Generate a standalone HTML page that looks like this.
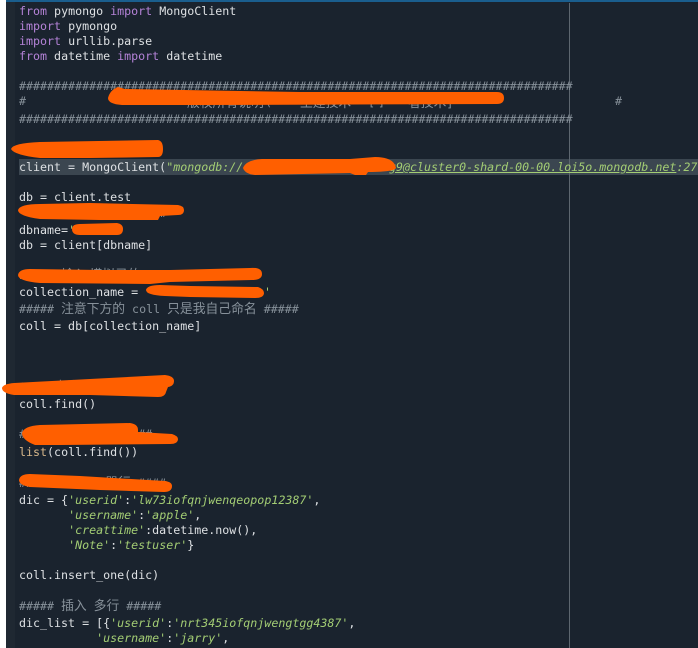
<!DOCTYPE html>
<html><head><meta charset="utf-8">
<style>
html,body{margin:0;padding:0;background:#fff}
#p{position:relative;width:698px;height:648px;overflow:hidden;background:#fff}
#b{position:absolute;left:6px;top:0;width:692px;height:648px;background:#1a232e}
#g{position:absolute;left:6px;top:0;width:9px;height:648px;background:#1f2832}
#t{position:absolute;left:6px;top:0;width:692px;height:1.5px;background:#1a5e8e}
#r{position:absolute;left:569px;top:3px;width:1px;height:645px;background:#5d666f}
#s{position:absolute;left:19px;top:159px;width:679px;height:16px;background:#3b4650}
.l{position:absolute;left:19px;height:16px;white-space:pre;font:11.65px/16px "DejaVu Sans Mono","Noto Sans CJK SC",monospace;color:#dde0e3}
.k{color:#b583d8}.c{color:#87919a}.o{color:#d9b98c}
.q{color:#a3cd74;font-style:italic}
.u{text-decoration:underline}
.z{font-family:"Noto Sans CJK SC",sans-serif;font-size:12.8px}
svg{position:absolute;left:0;top:0}
</style></head><body><div id="p">
<div id="b"></div><div id="g"></div><div id="t"></div><div id="s"></div><div id="r"></div>
<div class="l" style="top:3px"><span class="k">from</span> pymongo <span class="k">import</span> MongoClient</div>
<div class="l" style="top:18px"><span class="k">import</span> pymongo</div>
<div class="l" style="top:33px"><span class="k">import</span> urllib.parse</div>
<div class="l" style="top:48px"><span class="k">from</span> datetime <span class="k">import</span> datetime</div>
<div class="l c" style="top:78px">###############################################################################</div>
<div class="l c" style="top:93px">#</div>
<div class="l c" style="top:94px;left:187px"><span class="z">版权所有说明</span></div>
<div class="l c" style="top:94px;left:265px">(</div>
<div class="l c" style="top:94px;left:300px"><span class="z">王建技术</span></div>
<div class="l c" style="top:94px;left:368px">[</div>
<div class="l c" style="top:94px;left:378px">]</div>
<div class="l c" style="top:94px;left:408px"><span class="z">者技术</span>]</div>
<div class="l c" style="top:93px;left:615px">#</div>
<div class="l c" style="top:111px">###############################################################################</div>
<div class="l" style="top:159px">client = MongoClient(<span class="q">"mongodb://</span></div>
<div class="l q" style="top:159px;left:389px"><span class="u">g9@cluster0-shard-00-00.loi5o.mongodb.net</span>:27</div>
<div class="l" style="top:189px">db = client.test</div>
<div class="l c" style="top:205px;left:160px">#</div>
<div class="l" style="top:222px">dbname=<span class="q">'</span></div>
<div class="l" style="top:237px">db = client[dbname]</div>
<div class="l c" style="top:266px">##### <span class="z">输入 模拟录的</span> 11</div>
<div class="l" style="top:284px">collection_name = <span class="q">'</span></div>
<div class="l q" style="top:284px;left:264px">'</div>
<div class="l c" style="top:300px">##### <span class="z">注意下方的</span> coll <span class="z">只是我自己命名</span> #####</div>
<div class="l" style="top:318px">coll = db[collection_name]</div>
<div class="l c" style="top:378px">#####<span class="z">查询</span>       #</div>
<div class="l" style="top:396px">coll.find()</div>
<div class="l c" style="top:426px">#              ####</div>
<div class="l" style="top:444px"><span class="o">list</span>(coll.find())</div>
<div class="l c" style="top:474px">##### <span class="z">插入 一 單行</span> ####</div>
<div class="l" style="top:492px">dic = {<span class="q">'userid'</span>:<span class="q">'lw73iofqnjwenqeopop12387'</span>,</div>
<div class="l" style="top:507px">       <span class="q">'username'</span>:<span class="q">'apple'</span>,</div>
<div class="l" style="top:522px">       <span class="q">'creattime'</span>:datetime.now(),</div>
<div class="l" style="top:537px">       <span class="q">'Note'</span>:<span class="q">'testuser'</span>}</div>
<div class="l" style="top:567px">coll.insert_one(dic)</div>
<div class="l c" style="top:597px">##### <span class="z">插入</span> <span class="z">多行</span> #####</div>
<div class="l" style="top:615px">dic_list = [{<span class="q">'userid'</span>:<span class="q">'nrt345iofqnjwengtgg4387'</span>,</div>
<div class="l" style="top:630px">           <span class="q">'username'</span>:<span class="q">'jarry'</span>,</div>
<svg width="698" height="648" viewBox="0 0 698 648" fill="#ff5f00">
<path d="M108 98Q110 90 118 87L125 89L300 92L497 92Q504 92 504 98Q504 104 497 104L200 105L122 105Q108 104 108 98Z"/>
<path d="M11 149Q13 143 40 142L158 140Q163 141 163 149Q163 157 158 157L90 158L40 158Q14 155 11 149Z"/>
<path d="M243 168Q246 160 262 159L350 159L375 157Q394 157 396 168Q394 172 368 172L366 175L355 175L350 173L255 175Q245 174 243 168Z"/>
<path d="M18 210Q20 204 40 204L90 203L178 205Q184 206 184 210Q184 215 178 215L160 216L158 220L100 220L40 219Q18 216 18 210Z"/>
<path d="M72 229Q72 224 80 224L117 223Q123 224 123 229Q123 235 117 235L80 235Q72 235 72 229Z"/>
<path d="M18 275Q19 269 30 269L100 270L170 270L250 268Q262 267 262 274Q262 280 252 280L170 282L150 284L40 283Q18 281 18 275Z"/>
<path d="M146 290Q147 285 160 285L190 286L258 287Q264 289 264 293Q264 298 255 298L190 297L165 296Q146 295 146 290Z"/>
<path d="M2 388Q3 384 14 383L165 375Q174 376 174 381Q174 386 168 387L166 392Q165 397 158 397L90 395L14 395Q2 393 2 388Z"/>
<path d="M22 433Q24 426 40 425L130 423Q138 424 138 430L138 432L172 434Q178 436 178 439Q178 444 170 444L60 445L35 445Q22 440 22 433Z"/>
<path d="M19 480Q20 474 30 474L80 476L165 481Q172 482 172 486Q172 492 164 492L100 490L30 487Q19 485 19 480Z"/>
</svg>
</div></body></html>
